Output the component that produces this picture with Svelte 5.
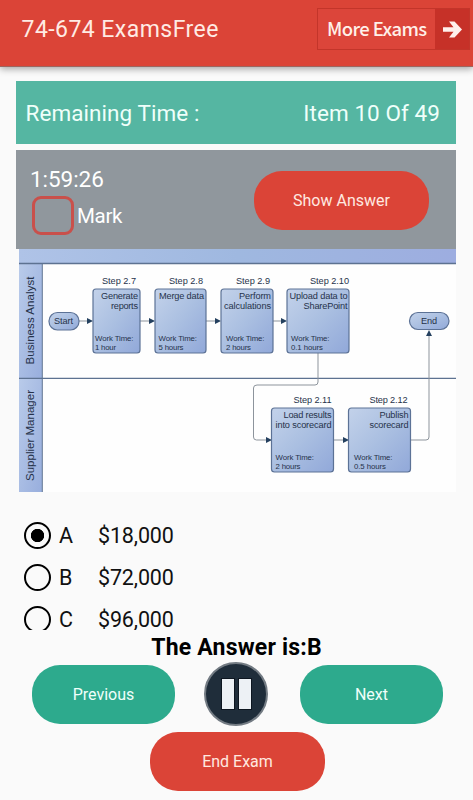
<script lang="ts">
	const steps = [
		{ x: 93, y: 289, w: 47, title: 'Step 2.7', titleX: 102, titleW: 34, lines: ['Generate', 'reports'], widths: [37, 27], right: 138, left: 95, time: '1 hour', timeW: 21 },
		{ x: 155, y: 289, w: 51, title: 'Step 2.8', titleX: 169, titleW: 34, lines: ['Merge data'], widths: [45], right: 204, left: 158.5, time: '5 hours', timeW: 25 },
		{ x: 221, y: 289, w: 52, title: 'Step 2.9', titleX: 236, titleW: 34, lines: ['Perform', 'calculations'], widths: [32, 47], right: 271, left: 226, time: '2 hours', timeW: 25 },
		{ x: 287, y: 289, w: 62, title: 'Step 2.10', titleX: 310, titleW: 39, lines: ['Upload data to', 'SharePoint'], widths: [58, 44], right: 347.5, left: 291, time: '0.1 hours', timeW: 32 },
		{ x: 271.5, y: 408, w: 62, title: 'Step 2.11', titleX: 293.5, titleW: 38, lines: ['Load results', 'into scorecard'], widths: [48, 56], right: 331.5, left: 275.5, time: '2 hours', timeW: 25 },
		{ x: 348.5, y: 408, w: 62, title: 'Step 2.12', titleX: 369.5, titleW: 38, lines: ['Publish', 'scorecard'], widths: [29, 39], right: 408.5, left: 354, time: '0.5 hours', timeW: 32 }
	];
	const arrows = [
		[78, 92, 321],
		[140, 154, 321],
		[206, 220, 321],
		[273, 286, 321],
		[333, 348, 440]
	];
	const options = [
		{ key: 'A', text: '$18,000' },
		{ key: 'B', text: '$72,000' },
		{ key: 'C', text: '$96,000' }
	];

	let selected = $state('A');
	let marked = $state(false);
</script>

<div class="app">
	<header>
		<h1>74-674 ExamsFree</h1>
		<button class="more">
			<span class="more-label">More Exams</span>
			<span class="more-icon">
				<svg width="19" height="17" viewBox="0 0 19 17">
					<path d="M0 6.200h10.500L6 0.500h5.500L19 8.500l-7.500 8H6l4.500-5.700H0z" fill="#fff0ec" />
				</svg>
			</span>
		</button>
	</header>

	<main>
		<div class="bar">
			<span>Remaining Time :</span>
			<span>Item 10 Of 49</span>
		</div>

		<div class="status">
			<div class="status-left">
				<span class="clock">1:59:26</span>
				<label class="mark">
					<input type="checkbox" bind:checked={marked} />
					<span>Mark</span>
				</label>
			</div>
			<button class="pill red">Show Answer</button>
		</div>

		<svg class="diagram" width="437" height="243" viewBox="19 249 437 243">
			<defs>
				<linearGradient id="box" x1="0" y1="0" x2="1" y2="1">
					<stop offset="0" stop-color="#c3d2ea" />
					<stop offset="0.5" stop-color="#aabfe1" />
					<stop offset="1" stop-color="#91a8d9" />
				</linearGradient>
				<linearGradient id="lane" x1="0" y1="0" x2="1" y2="1">
					<stop offset="0" stop-color="#b9cbea" />
					<stop offset="1" stop-color="#98aedd" />
				</linearGradient>
				<linearGradient id="top" x1="0" y1="0" x2="1" y2="0">
					<stop offset="0" stop-color="#afc3e7" />
					<stop offset="0.5" stop-color="#9fb8e0" />
					<stop offset="1" stop-color="#9dade0" />
				</linearGradient>
			</defs>
			<rect x="19" y="249" width="437" height="243" fill="#fefefe" />
			<rect x="19" y="249" width="437" height="15" fill="url(#top)" />
			<rect x="19" y="264" width="23" height="114" fill="url(#lane)" />
			<rect x="19" y="378" width="23" height="115" fill="url(#lane)" />
			<path d="M19 263.500H456M19 378.300H456" stroke="#5d7291" stroke-width="1.300" />
			<path d="M42.300 264V492" stroke="#5d7291" />
			<text class="lane" transform="translate(34 364.500) rotate(-90)" textLength="88">Business Analyst</text>
			<text class="lane" transform="translate(34 481) rotate(-90)" textLength="91">Supplier Manager</text>

			<path
				class="wire"
				d="M318 353v29q0 3-3 3H257q-3.500 0-3.500 3V437q0 3 3 3H267M411 440h15q3 0 3-3V334"
			/>
			<path class="head" d="M266 437l6 3-6 3zM426 336l3-6 3 6z" />
			{#each arrows as [from, to, y]}
				<path class="wire" d="M{from} {y}H{to - 4}" />
				<path class="head" d="M{to - 5} {y - 3}l6 3-6 3z" />
			{/each}

			<rect class="shape" x="49" y="312.500" width="30" height="17.500" rx="8.500" />
			<text class="label" x="54" y="324" textLength="19">Start</text>
			<rect class="shape" x="409.500" y="312.500" width="39.500" height="17" rx="8.500" />
			<text class="label" x="421" y="323.700" textLength="16">End</text>

			{#each steps as step}
				<text class="label" x={step.titleX} y={step.y - 5} textLength={step.titleW}>{step.title}</text>
				<rect class="shape" x={step.x} y={step.y} width={step.w} height="64" rx="3" />
				{#each step.lines as line, i}
					<text
						class="label"
						x={step.right - step.widths[i]}
						y={step.y + 9.500 + i * 10.500}
						textLength={step.widths[i]}>{line}</text
					>
				{/each}
				<text class="small" x={step.left} y={step.y + 51.500} textLength="38.500">Work Time:</text>
				<text class="small" x={step.left} y={step.y + 60.700} textLength={step.timeW}>{step.time}</text>
			{/each}
		</svg>

		<div class="options">
			{#each options as option}
				<label class="option">
					<input type="radio" name="answer" value={option.key} bind:group={selected} />
					<span class="key">{option.key}</span>
					<span class="value">{option.text}</span>
				</label>
			{/each}
		</div>
	</main>

	<footer>
		<p class="answer">The Answer is:B</p>
		<div class="controls">
			<button class="pill green">Previous</button>
			<button class="pause" aria-label="Pause">
				<span></span>
				<span></span>
			</button>
			<button class="pill green">Next</button>
		</div>
		<button class="pill red end">End Exam</button>
	</footer>
</div>

<style>
	:global(body) {
		background: #fafafa;
	}
	.app {
		width: 473px;
		height: 800px;
		overflow: hidden;
		display: flex;
		flex-direction: column;
		font-family: Roboto, 'Liberation Sans', sans-serif;
		color: #111;
	}
	button {
		font: inherit;
		border: none;
		padding: 0;
	}
	header {
		flex: none;
		height: 67px;
		box-sizing: border-box;
		padding: 8px 3px 0 21.5px;
		display: flex;
		justify-content: space-between;
		align-items: flex-start;
		background: #db4437;
		border-bottom: 1px solid #9d6660;
		box-shadow: 0 2px 7px rgba(0, 0, 0, 0.35);
	}
	h1 {
		margin: 8px 0 0;
		font-size: 23px;
		line-height: 28px;
		font-weight: 400;
		letter-spacing: 0.45px;
		color: #ffebe4;
		white-space: nowrap;
	}
	.more {
		display: flex;
		width: 153px;
		height: 42px;
		box-sizing: border-box;
		border: 1px solid #c3352a;
		background: #dc453a;
		color: #fff0e9;
	}
	.more-label {
		flex: 1;
		padding-left: 9px;
		text-align: left;
		font: 500 18.5px/38px 'Noto Sans CJK SC', 'Noto Sans', sans-serif;
		letter-spacing: -0.6px;
		white-space: nowrap;
	}
	.more-icon {
		width: 34px;
		height: 100%;
		display: flex;
		align-items: center;
		justify-content: center;
		background: #c63128;
	}
	main {
		padding: 14px 17px 0 16px;
	}
	.bar {
		height: 63px;
		box-sizing: border-box;
		padding: 0 16px 0 9.5px;
		display: flex;
		justify-content: space-between;
		align-items: center;
		background: #55b6a2;
		color: #effffa;
		font-size: 22.5px;
		letter-spacing: 0.07px;
		white-space: nowrap;
	}
	.status {
		height: 99px;
		margin-top: 6px;
		box-sizing: border-box;
		padding: 15px 27px 0 14px;
		display: flex;
		justify-content: space-between;
		background: #90979d;
		color: #fff;
	}
	.status-left {
		display: flex;
		flex-direction: column;
	}
	.clock {
		font-size: 22.5px;
		line-height: 28px;
		letter-spacing: -0.05px;
	}
	.mark {
		display: flex;
		align-items: center;
		margin: 3px 0 0 2px;
		font-size: 20.5px;
		letter-spacing: -0.3px;
	}
	.mark input {
		appearance: none;
		width: 42px;
		height: 39px;
		margin: 0 3px 0 0;
		box-sizing: border-box;
		border: 3px solid #c9504b;
		border-radius: 9px;
	}
	.pill {
		width: 143px;
		height: 59px;
		border-radius: 28px;
		font-size: 16px;
	}
	.red {
		width: 175px;
		background: #db4437;
		color: #ffe9e0;
	}
	.green {
		background: #2daa8d;
		color: #effffa;
	}
	.status .pill {
		margin-top: 5.5px;
	}
	.diagram {
		display: block;
		margin-left: 3px;
		font-family: 'Liberation Sans', Arial, sans-serif;
	}
	.lane {
		font-size: 11.5px;
		fill: #26324a;
	}
	.label {
		font-size: 9.2px;
		fill: #26324a;
	}
	.small {
		font-size: 7.8px;
		fill: #26324a;
	}
	.shape {
		fill: url(#box);
		stroke: #5c7296;
		stroke-width: 1.2px;
	}
	.wire {
		fill: none;
		stroke: #8d949c;
	}
	.head {
		fill: #24405f;
	}
	.options {
		height: 116px;
		margin-top: 22px;
		padding-left: 8px;
		overflow: hidden;
	}
	.option {
		display: flex;
		align-items: center;
		height: 42px;
		font-size: 21.5px;
	}
	.option input {
		appearance: none;
		width: 27px;
		height: 27px;
		margin: 0;
		box-sizing: border-box;
		border: 2.6px solid #000;
		border-radius: 50%;
	}
	.option input:checked {
		background: radial-gradient(circle, #000 6.3px, transparent 7px);
	}
	.key {
		width: 31px;
		padding-left: 8px;
	}
	.value {
		padding-left: 8px;
		letter-spacing: -0.15px;
	}
	footer {
		display: flex;
		flex-direction: column;
		align-items: center;
	}
	.answer {
		margin: 4px 0 0;
		font-size: 23px;
		line-height: 28px;
		font-weight: 700;
		letter-spacing: 0.2px;
		color: #000;
	}
	.controls {
		width: 411px;
		display: flex;
		justify-content: space-between;
		align-items: center;
		margin-left: 2px;
	}
	.pause {
		width: 64px;
		height: 64px;
		margin-right: 3px;
		box-sizing: border-box;
		display: flex;
		align-items: center;
		justify-content: center;
		gap: 5px;
		border: 2px solid #737b83;
		border-radius: 50%;
		background: #1f2d3a;
	}
	.pause span {
		width: 12px;
		height: 30px;
		background: #edf1f5;
		box-shadow: 0 0 0 1px #0d1620;
	}
	.end {
		margin: 6px 0 0 2px;
	}
</style>
